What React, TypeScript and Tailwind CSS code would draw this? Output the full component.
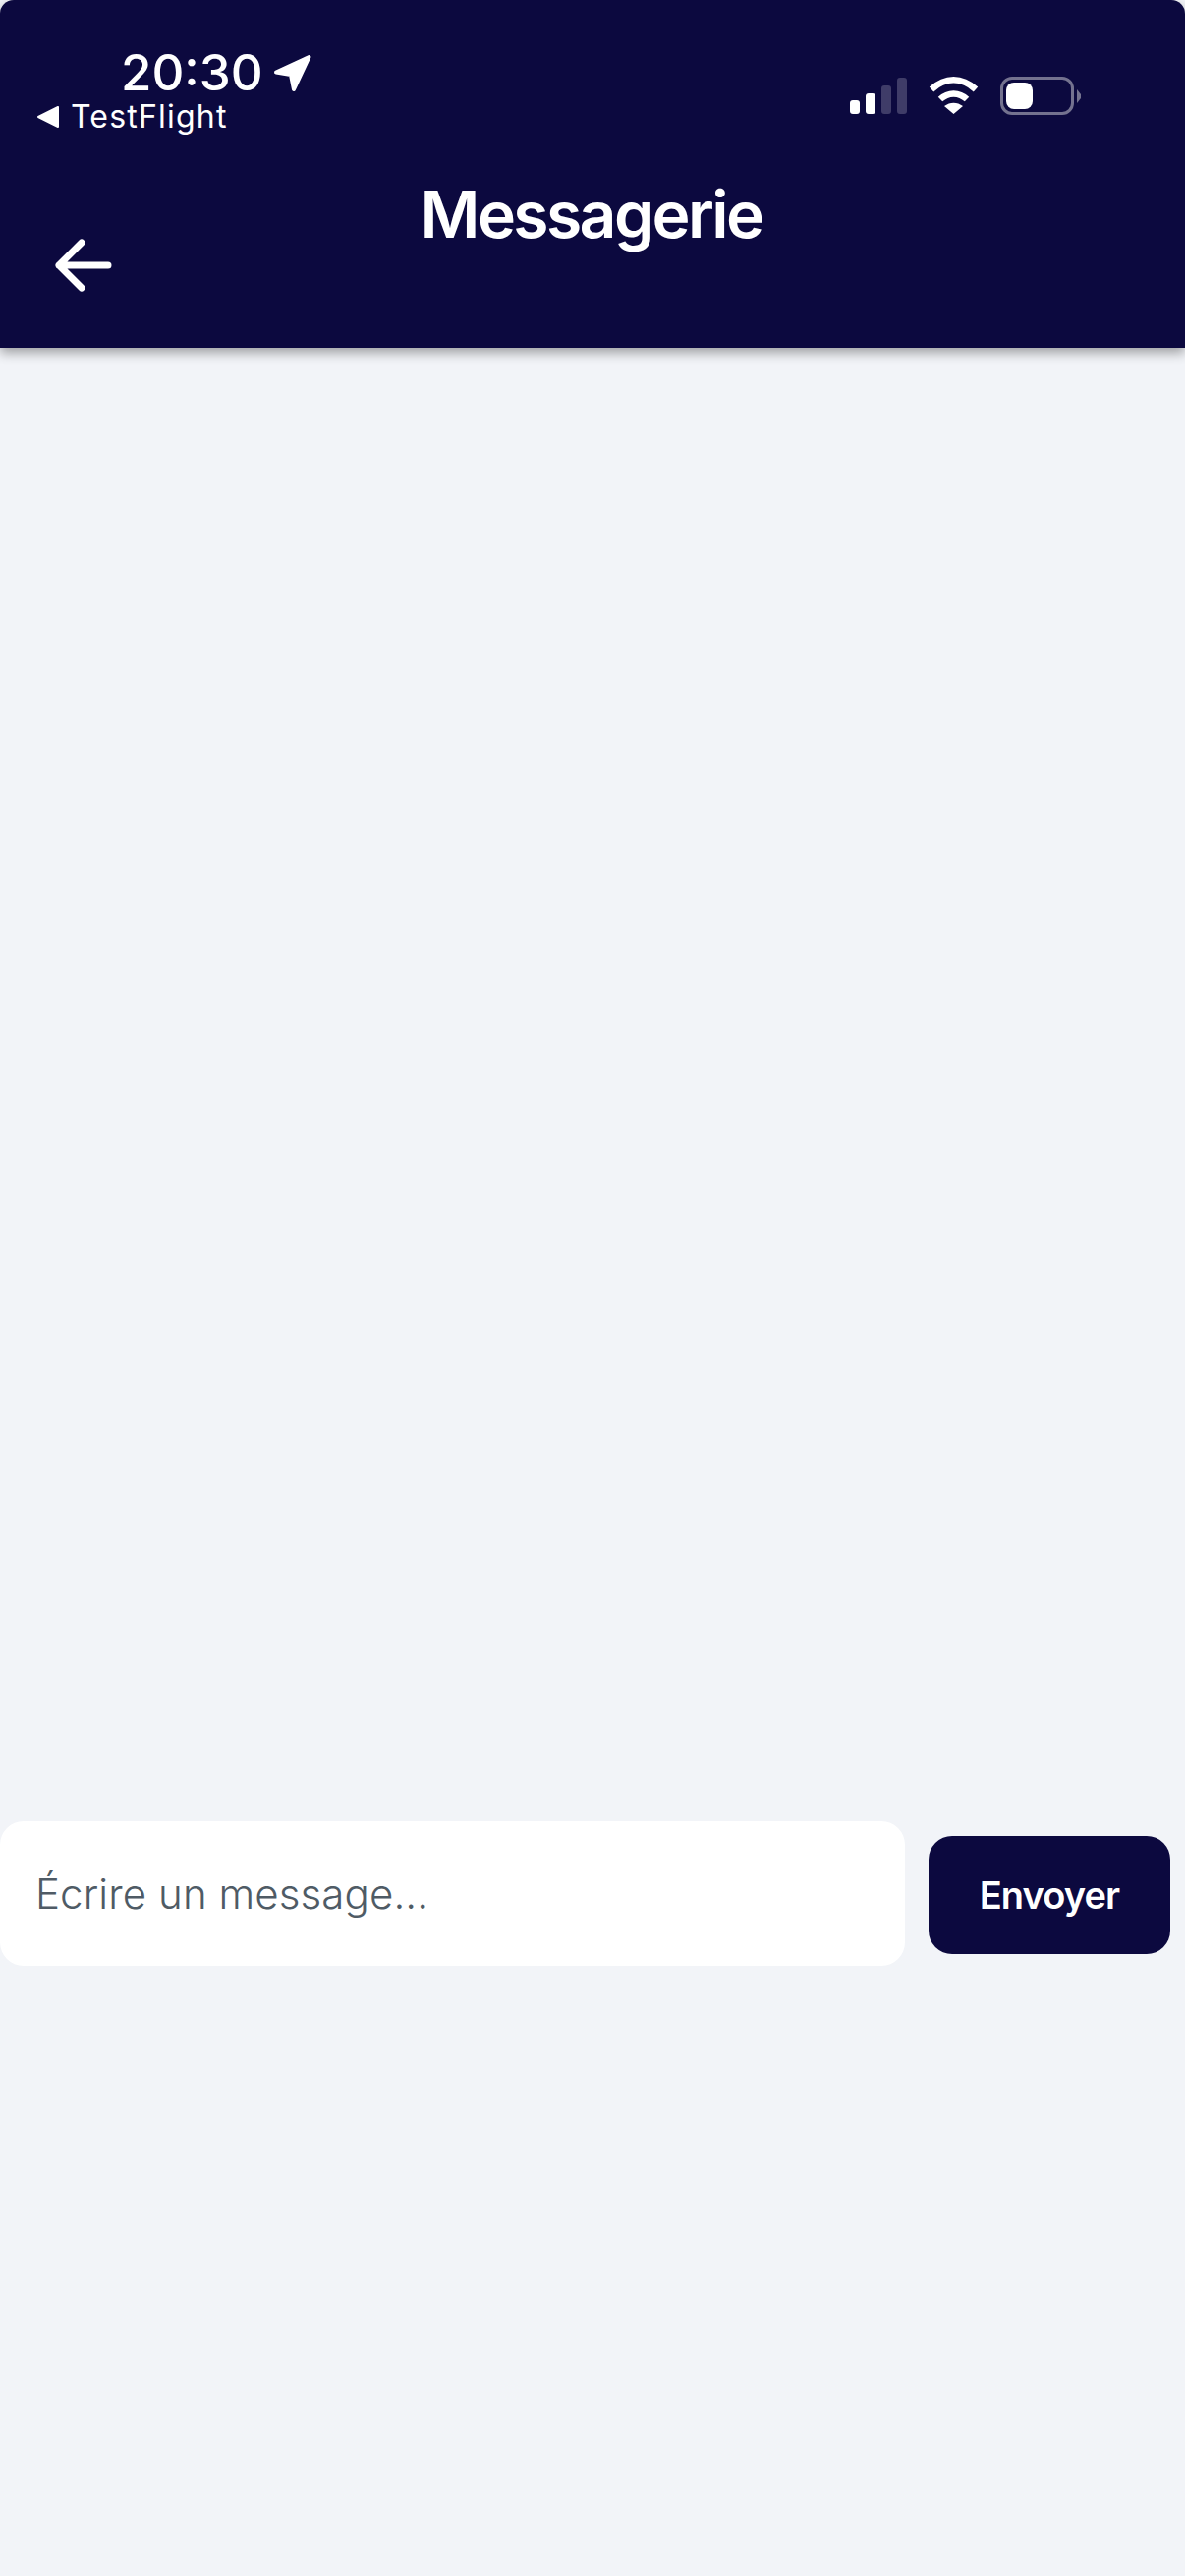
export default function App() {
  return (
    <div className="flex h-[2622px] w-[1206px] flex-col overflow-hidden bg-[#f2f4f8] font-['Inter',sans-serif]">
      <header className="relative z-10 flex h-[354px] shrink-0 flex-col rounded-t-[14px] bg-[#0c093f] text-white shadow-[0_5px_12px_rgba(0,0,0,0.35)]">
        <div className="flex h-[138px] shrink-0 justify-between">
          <div className="flex flex-col pl-[38px] pt-[44px]">
            <div className="flex h-[60px] items-center pl-[85px]">
              <span className="text-[51px] leading-[60px] font-medium">20:30</span>
              <svg viewBox="0 0 39 39" className="ml-[10px] h-[39px] w-[39px]" fill="white" stroke="white" strokeWidth="4" strokeLinejoin="round">
                <path d="M3 18.5 L36.5 3 L21 36 L18 21 Z" />
              </svg>
            </div>
            <div className="mt-[-4px] flex h-[38px] items-center">
              <svg viewBox="0 0 22 22" className="h-[22px] w-[22px]" fill="white" stroke="white" strokeWidth="2" strokeLinejoin="round">
                <path d="M1 11 L21 1 L21 21 Z" />
              </svg>
              <span className="ml-[12px] text-[32px] leading-[38px] tracking-[1.2px]">TestFlight</span>
            </div>
          </div>
          <div className="flex items-start pr-[106px] pt-[78px]">
            <div className="flex h-[38px] items-end gap-[6px]">
              <div className="h-[14px] w-[10px] rounded-[3px] bg-white" />
              <div className="h-[21px] w-[10px] rounded-[3px] bg-white" />
              <div className="h-[29px] w-[10px] rounded-[3px] bg-[#3f3c68]" />
              <div className="h-[37px] w-[10px] rounded-[3px] bg-[#3f3c68]" />
            </div>
            <svg viewBox="0 0 51 38" className="ml-[22px] h-[38px] w-[51px]" fill="none" stroke="white" strokeWidth="6.5">
              <path d="M3 13 C17 0 34 0 48 13" />
              <path d="M12 23 C20 15.5 31 15.5 39 23" />
              <path d="M16 30 C22 25.5 29 25.5 35 30 L25.5 38 Z" fill="white" stroke="none" />
            </svg>
            <div className="ml-[22px] flex items-center">
              <div className="flex h-[39px] w-[75px] rounded-[12px] border-[3px] border-[#74728f] p-[3px]">
                <div className="h-full w-[27px] rounded-[8px] bg-white" />
              </div>
              <svg viewBox="0 0 4 14" className="ml-[3px] h-[14px] w-[4px]" fill="#74728f">
                <path d="M0 0 L4 5 V9 L0 14 Z" />
              </svg>
            </div>
          </div>
        </div>
        <h1 className="mt-[40px] h-[80px] pr-[3px] text-center text-[66px] leading-[80px] font-semibold tracking-[-2.6px]">Messagerie</h1>
        <button className="ml-[52px] mt-[-20px] h-[64px] w-[66px] text-left">
          <svg viewBox="0 0 66 64" className="h-[64px] w-[66px]" fill="none" stroke="white" strokeWidth="7" strokeLinecap="round" strokeLinejoin="round">
            <path d="M58 32 H8 M31 9 L8 32 L31 55" />
          </svg>
        </button>
      </header>
      <main className="flex flex-1 flex-col pt-[1500px]">
        <div className="flex items-start">
          <div className="flex h-[147px] w-[921px] items-center rounded-[24px] bg-white pl-[36px] text-[42px] font-light tracking-[0.1px] text-[#4f5b65]">
            Écrire un message...
          </div>
          <button className="ml-[24px] mt-[15px] h-[120px] w-[246px] rounded-[24px] bg-[#0c093f] text-[38px] font-semibold tracking-[-0.9px] text-white">
            Envoyer
          </button>
        </div>
      </main>
    </div>
  );
}
